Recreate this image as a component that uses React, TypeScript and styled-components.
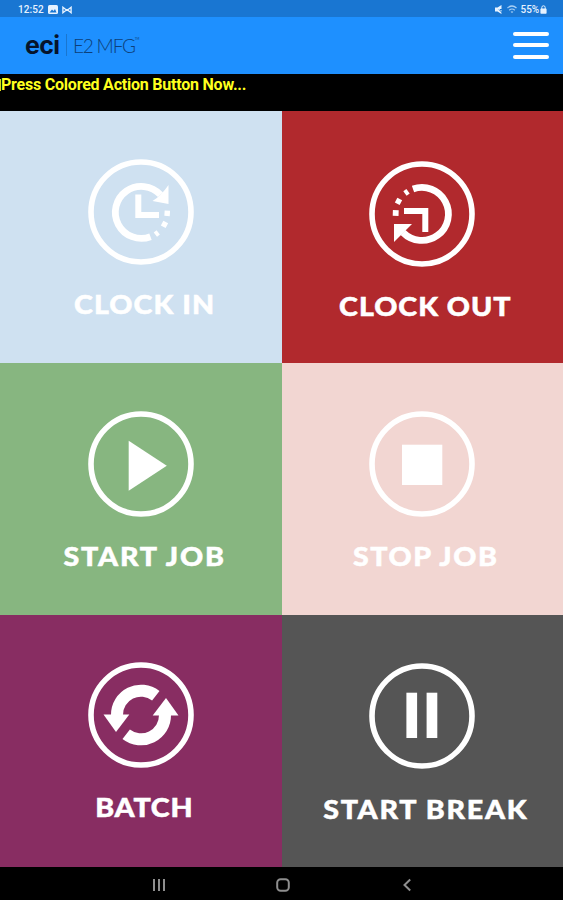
import React from "react";
import styled, { createGlobalStyle } from "styled-components";

const GlobalStyle = createGlobalStyle`
  * { box-sizing: border-box; }
  html, body { margin: 0; padding: 0; background: #000; }
`;

const Screen = styled.div`
  width: 563px;
  height: 900px;
  display: flex;
  flex-direction: column;
  overflow: hidden;
  background: #000;
  font-family: Roboto, "Liberation Sans", sans-serif;
`;

const StatusBar = styled.div`
  height: 17px;
  flex: none;
  display: flex;
  align-items: center;
  justify-content: space-between;
  padding: 2px 16px 0 18px;
  background: #1976d2;
  color: #e6f2ff;
  font-size: 10px;
  line-height: 14px;
`;

const StatusGroup = styled.div<{ $gap: number }>`
  display: flex;
  align-items: center;
  gap: ${(p) => p.$gap}px;
`;

const StatusText = styled.span<{ $spacing: number }>`
  letter-spacing: ${(p) => p.$spacing}px;
  font-weight: 500;
`;

const Header = styled.header`
  height: 56.5px;
  flex: none;
  display: flex;
  align-items: center;
  justify-content: space-between;
  padding: 0 14px 0 25px;
  background: #1e90ff;
`;

const Brand = styled.div`
  display: flex;
  align-items: center;
  height: 22px;
`;

const BrandName = styled.span`
  width: 35px;
  font: 700 25px/22px Inter, sans-serif;
  letter-spacing: -0.7px;
  color: #06142b;
`;

const BrandDivider = styled.span`
  width: 1px;
  height: 22px;
  margin: 0 6px 0 6px;
  background: #1a76cf;
`;

const ProductName = styled.span`
  padding-top: 2px;
  font: 300 19px/22px Lato, sans-serif;
  letter-spacing: -1.2px;
  color: #0d3f78;
`;

const Trademark = styled.span`
  align-self: flex-start;
  font: 400 3px/10px Lato, sans-serif;
  color: #0d3f78;
`;

const MenuButton = styled.button`
  width: 36px;
  height: 27px;
  padding: 0;
  border: 0;
  background: none;
  display: flex;
  flex-direction: column;
  justify-content: space-between;
`;

const MenuLine = styled.span`
  height: 4px;
  border-radius: 2px;
  background: #fff;
`;

const Message = styled.div`
  height: 37.5px;
  flex: none;
  display: flex;
  align-items: flex-start;
  padding-top: 4.5px;
  color: #ffff1e;
  font-size: 16px;
  line-height: 14px;
  letter-spacing: -0.22px;
  font-weight: 700;
  white-space: nowrap;
`;

const Caret = styled.span`
  width: 1px;
  height: 12px;
  margin-top: 1px;
  background: #d9d91a;
`;

const Grid = styled.main`
  flex: none;
  height: 756px;
  display: grid;
  grid-template-columns: 281.5px 281.5px;
  grid-template-rows: 252.4px 252px 251.6px;
`;

const Tile = styled.button<{ $color: string; $top: number }>`
  display: flex;
  flex-direction: column;
  align-items: center;
  padding: ${(p) => p.$top}px 0 0;
  border: 0;
  background: ${(p) => p.$color};
  color: #fff;
`;

const TileIcon = styled.svg`
  width: 108px;
  height: 108px;
  flex: none;
  display: block;
  fill: #fff;
`;

const TileLabel = styled.span<{ $spacing: number; $gap: number }>`
  margin: ${(p) => p.$gap}px ${(p) => -p.$spacing}px 0 6px;
  font: 900 27px/30px Lato, sans-serif;
  letter-spacing: ${(p) => p.$spacing}px;
  -webkit-text-stroke: 0.5px #fff;
  transform: scaleX(1.06);
  white-space: nowrap;
`;

const NavBar = styled.nav`
  height: 33px;
  flex: none;
  display: grid;
  grid-template-columns: 124px 124px 124px;
  justify-content: center;
  justify-items: center;
  align-items: center;
  padding: 3px 0 0 2px;
  background: #000;
`;

const NavIcon = styled.svg`
  display: block;
  fill: none;
  stroke: #8e8e8e;
  stroke-width: 2;
`;

const stroke = (width: number) => ({ fill: "none", stroke: "#fff", strokeWidth: width });

const ClockInGlyph = () => (
  <>
    <path d="M19.5 -17.2 A26 26 0 1 0 9.5 24.7" {...stroke(6.8)} />
    <path d="M27.5 -27 V-8 L11.5 -11 Q20 -16 27.5 -27Z" />
    <path d="M-2.7 -17.5 V3 H18" {...stroke(6)} />
    <rect x="-2.7" y="-2.7" width="5.4" height="5.4" transform="translate(26.2 1.3) rotate(3)" />
    <rect x="-2.7" y="-2.7" width="5.4" height="5.4" transform="translate(23.5 12.3) rotate(28)" />
    <rect x="-1.8" y="-2.7" width="3.6" height="5.4" transform="translate(15.8 21.5) rotate(-38)" />
  </>
);

const ClockOutGlyph = () => (
  <>
    <path d="M-9 -25 A26.5 26.5 0 1 1 -19 18.5" {...stroke(6.8)} />
    <path d="M-28 10 H-10 L-28 28Z" />
    <path d="M-18 -3 H3.3 V18" {...stroke(6)} />
    <rect x="-2.9" y="-2.9" width="5.8" height="5.8" transform="translate(-26.3 -1) rotate(2)" />
    <rect x="-2.7" y="-2.7" width="5.4" height="5.4" transform="translate(-23.5 -12.7) rotate(28)" />
    <rect x="-1.9" y="-2.8" width="3.8" height="5.6" transform="translate(-15.5 -21.7) rotate(-36)" />
  </>
);

const PlayGlyph = () => <path d="M-12.3 -23.3 L25.8 1.7 L-12.3 26.7Z" />;
const StopGlyph = () => <rect x="-20" y="-19.3" width="40.3" height="40.3" />;

const BatchArrow = () => (
  <>
    <path d="M-24 0 A24 24 0 0 1 14.8 -19.2" {...stroke(12)} />
    <path d="M-37.5 -0.5 H-11.7 L-25 17Z" />
  </>
);

const BatchGlyph = () => (
  <>
    <BatchArrow />
    <g transform="rotate(180)">
      <BatchArrow />
    </g>
  </>
);

const PauseGlyph = () => (
  <>
    <rect x="-15.6" y="-23.3" width="10.7" height="45.3" />
    <rect x="4.6" y="-23.3" width="10.7" height="45.3" />
  </>
);

const actions = [
  { label: "CLOCK IN", color: "#cfe1f1", top: 47, gap: 23, spacing: 1, Glyph: ClockInGlyph },
  { label: "CLOCK OUT", color: "#b1292d", top: 49, gap: 23, spacing: 0.9, Glyph: ClockOutGlyph },
  { label: "START JOB", color: "#87b680", top: 46.6, gap: 23, spacing: 1.7, Glyph: PlayGlyph },
  { label: "STOP JOB", color: "#f2d6d2", top: 46.6, gap: 23.5, spacing: 1.45, Glyph: StopGlyph },
  { label: "BATCH", color: "#882d62", top: 46.1, gap: 22.9, spacing: 0.7, Glyph: BatchGlyph },
  { label: "START BREAK", color: "#555555", top: 47.1, gap: 23.9, spacing: 1.6, Glyph: PauseGlyph },
];

export default function App() {
  return (
    <>
      <GlobalStyle />
      <Screen>
        <StatusBar>
          <StatusGroup $gap={4}>
            <StatusText $spacing={0.1}>12:52</StatusText>
            <svg width="10" height="9" viewBox="0 0 10 9">
              <rect width="10" height="9" rx="1.5" fill="#e6f2ff" />
              <path d="M1.5 7.5 L4 4.5 L5.5 6 L7 4 L8.5 7.5Z" fill="#1976d2" />
            </svg>
            <svg width="10" height="8" viewBox="0 0 11 8" fill="none" stroke="#e6f2ff" strokeWidth="1.5">
              <path d="M1 1 V7 L5.5 3.5 L10 7 V1 L5.5 4.5Z" />
            </svg>
          </StatusGroup>
          <StatusGroup $gap={4}>
            <svg width="8" height="9" viewBox="0 0 8 9">
              <path d="M0 2.5 H2.5 L6.5 0 V9 L2.5 6.5 H0Z" fill="#e6f2ff" />
              <path d="M4 4.5 L8 8.5 M5 4.5 H8" stroke="#1976d2" />
            </svg>
            <svg width="10" height="9" viewBox="0 0 10 9" fill="none" stroke="#a9d0f5" strokeWidth="1.2">
              <path d="M0.5 3 Q5 -1 9.5 3 M2.2 5.2 Q5 2.8 7.8 5.2 M4 7.2 Q5 6.4 6 7.2" />
            </svg>
            <StatusGroup $gap={1}>
              <StatusText $spacing={-0.1}>55%</StatusText>
              <svg width="7" height="9" viewBox="0 0 7 9">
                <path d="M1.8 4 V2.5 a1.7 1.7 0 0 1 3.4 0 V4" fill="none" stroke="#e6f2ff" />
                <rect x="0.4" y="3.6" width="6.2" height="5.2" rx="0.8" fill="#e6f2ff" />
              </svg>
            </StatusGroup>
          </StatusGroup>
        </StatusBar>
        <Header>
          <Brand>
            <BrandName>eci</BrandName>
            <BrandDivider />
            <ProductName>E2 MFG</ProductName>
            <Trademark>TM</Trademark>
          </Brand>
          <MenuButton aria-label="Menu">
            <MenuLine />
            <MenuLine />
            <MenuLine />
          </MenuButton>
        </Header>
        <Message>
          <Caret />
          Press Colored Action Button Now...
        </Message>
        <Grid>
          {actions.map(({ label, color, top, gap, spacing, Glyph }) => (
            <Tile key={label} $color={color} $top={top}>
              <TileIcon viewBox="-54 -54 108 108">
                <circle r="50" {...stroke(5.6)} />
                <Glyph />
              </TileIcon>
              <TileLabel $spacing={spacing} $gap={gap}>{label}</TileLabel>
            </Tile>
          ))}
        </Grid>
        <NavBar>
          <NavIcon width="14" height="14" viewBox="0 0 14 14">
            <path d="M2 1 V13 M7 1 V13 M12 1 V13" />
          </NavIcon>
          <NavIcon width="14" height="14" viewBox="0 0 14 14">
            <rect x="1.2" y="1.2" width="11.6" height="11.6" rx="3.5" />
          </NavIcon>
          <NavIcon width="10" height="14" viewBox="0 0 10 14">
            <path d="M8.2 1.5 L2.5 7 L8.2 12.5" />
          </NavIcon>
        </NavBar>
      </Screen>
    </>
  );
}
